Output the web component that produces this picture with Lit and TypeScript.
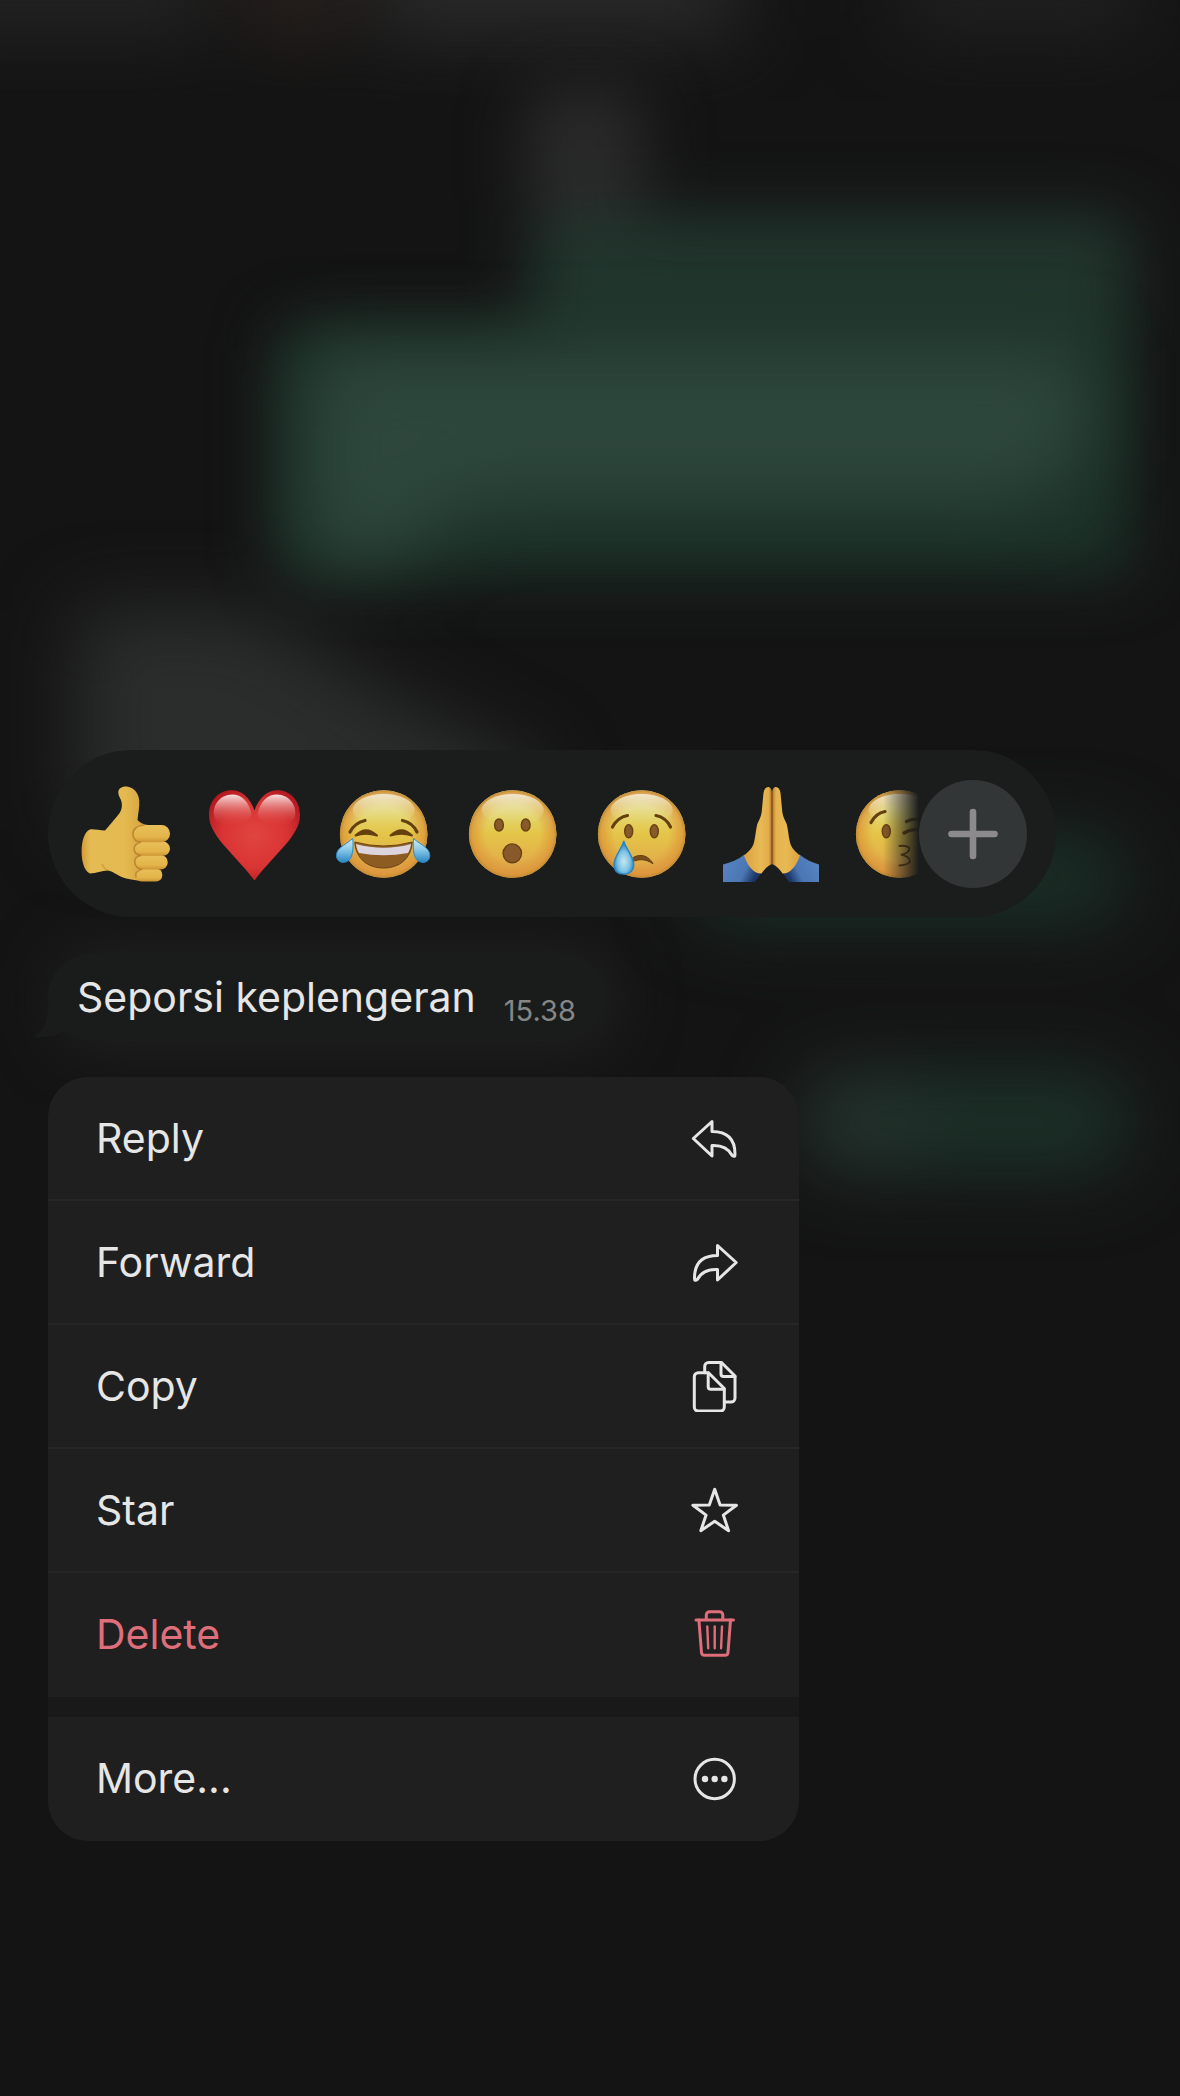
import { LitElement, html, svg, css, type SVGTemplateResult } from "lit";
import { customElement, property } from "lit/decorators.js";
import { classMap } from "lit/directives/class-map.js";

/* ---------- Reaction artwork (96 x 96 canvas each) ---------- */

const gradients = svg`
  <linearGradient id="face" x1="0" y1="0" x2="0" y2="1">
    <stop offset="0" stop-color="#e6dfa6"/>
    <stop offset="0.3" stop-color="#e3d46a"/>
    <stop offset="0.5" stop-color="#e4c548"/>
    <stop offset="0.8" stop-color="#e2b04a"/>
    <stop offset="1" stop-color="#dca04a"/>
  </linearGradient>
  <radialGradient id="rim">
    <stop offset="0.62" stop-color="#dd9238" stop-opacity="0"/>
    <stop offset="0.92" stop-color="#dd9238" stop-opacity="0.7"/>
    <stop offset="1" stop-color="#c08c35"/>
  </radialGradient>
  <linearGradient id="shine" x1="0" y1="0" x2="0" y2="1">
    <stop offset="0" stop-color="#f1eddc" stop-opacity="0.9"/>
    <stop offset="1" stop-color="#e6d770" stop-opacity="0"/>
  </linearGradient>
  <linearGradient id="tear" x1="0" y1="0" x2="0" y2="1">
    <stop offset="0" stop-color="#d8ecf2"/>
    <stop offset="0.45" stop-color="#8ccbe8"/>
    <stop offset="1" stop-color="#2a86c4"/>
  </linearGradient>
  <radialGradient id="drop" cx="0.5" cy="0.62" r="0.55">
    <stop offset="0" stop-color="#c9e6f0"/>
    <stop offset="0.55" stop-color="#7fc4e4"/>
    <stop offset="1" stop-color="#2580c0"/>
  </radialGradient>
  <radialGradient id="heart" cx="0.5" cy="0.5" r="0.6">
    <stop offset="0" stop-color="#e0453f"/>
    <stop offset="0.6" stop-color="#d93434"/>
    <stop offset="1" stop-color="#b0181f"/>
  </radialGradient>
  <linearGradient id="gloss" x1="0" y1="0" x2="0" y2="1">
    <stop offset="0" stop-color="#f6e0e0"/>
    <stop offset="0.4" stop-color="#e68a88" stop-opacity="0.8"/>
    <stop offset="1" stop-color="#dc4440" stop-opacity="0"/>
  </linearGradient>
  <linearGradient id="wrist" x1="0" y1="0" x2="1" y2="0">
    <stop offset="0" stop-color="#d39a38"/>
    <stop offset="0.12" stop-color="#e5bb54"/>
    <stop offset="0.6" stop-color="#e4b950"/>
    <stop offset="1" stop-color="#cf9836"/>
  </linearGradient>
  <linearGradient id="finger" x1="0" y1="0" x2="0" y2="1">
    <stop offset="0" stop-color="#e8c05a"/>
    <stop offset="0.7" stop-color="#e3b44a"/>
    <stop offset="1" stop-color="#cd9434"/>
  </linearGradient>
  <linearGradient id="palmL" x1="0" y1="0" x2="1" y2="0">
    <stop offset="0" stop-color="#dca23e"/>
    <stop offset="0.6" stop-color="#e8b954"/>
    <stop offset="0.88" stop-color="#e2ad4a"/>
    <stop offset="1" stop-color="#b27428"/>
  </linearGradient>
  <linearGradient id="palmR" x1="0" y1="0" x2="1" y2="0">
    <stop offset="0" stop-color="#b27428"/>
    <stop offset="0.14" stop-color="#e6b24e"/>
    <stop offset="0.5" stop-color="#e8b954"/>
    <stop offset="1" stop-color="#dca23e"/>
  </linearGradient>
  <linearGradient id="sleeveL" x1="0" y1="0" x2="1" y2="0.35">
    <stop offset="0" stop-color="#5a86c2"/>
    <stop offset="0.7" stop-color="#4a76b4"/>
    <stop offset="1" stop-color="#1c3766"/>
  </linearGradient>
  <linearGradient id="sleeveR" x1="1" y1="0" x2="0" y2="0.35">
    <stop offset="0" stop-color="#5a86c2"/>
    <stop offset="0.7" stop-color="#4a76b4"/>
    <stop offset="1" stop-color="#1c3766"/>
  </linearGradient>
`;

const face = svg`
  <circle cx="47.7" cy="48" r="43.8" fill="url(#face)"/>
  <circle cx="47.7" cy="48" r="43.8" fill="url(#rim)"/>
  <ellipse cx="47.7" cy="24" rx="31" ry="16" fill="url(#shine)"/>
`;

const eye = (x: number, y: number, rx: number, ry: number) => svg`
  <ellipse cx=${x} cy=${y} rx=${rx} ry=${ry} fill="#88592a" stroke="#68420f" stroke-width="1.4"/>
`;

const brow = (d: string) => svg`
  <path d=${d} fill="none" stroke="#65400f" stroke-width="3.2" stroke-linecap="round"/>
`;

const thumb = svg`
  <path fill="url(#wrist)" d="M40.3 6 C40.5 1.5 45 .2 49 .4 C57 1.5 60.5 8 61.2 14 C61.8 21 60 28 59.5 34 C62 37 66 38.5 70 39
    L76 60 L72 88 L66 95 C57 94.5 49 93 43.7 91 C38 88.5 35 85.5 30 84.5 C24 84.5 18 87.5 12 87.5 C6 85 3.6 75 3.6 65
    C3.7 55 6.5 45 12 43.4 C17 43 22 44.5 27 44.4 C31 40 37 33 42 26.5 C44.5 22 44.4 17 42.5 13 C41.3 10.5 40.2 8.500 40.3 6 Z"/>
  <path fill="none" stroke="#b37a24" stroke-opacity="0.35" stroke-width="2" d="M30 84.5 C27 83 25 81 24 78"/>
  <rect x="57.3" y="82.5" width="27" height="13" rx="6.2" fill="url(#finger)"/>
  <rect x="56.7" y="69" width="33" height="14.6" rx="7" fill="url(#finger)"/>
  <rect x="56" y="55.6" width="36" height="14.2" rx="7" fill="url(#finger)"/>
  <rect x="55.3" y="39" width="36.7" height="17.2" rx="8.5" fill="url(#finger)"/>
  <path fill="none" stroke="#a66c1f" stroke-opacity="0.6" stroke-width="1.6" stroke-linecap="round"
    d="M66 39.2 C58 39.5 54.5 44 55 49 C55.5 54 58 56 63 56.2 C57 57.5 56 60 56.2 63 C56.5 67 59 69.3 63 69.5
    C58 70.5 56.5 73 56.8 76 C57.2 80 59.5 82.8 64 83.2 C58 84.5 57 88 58 91"/>
`;

const heart = svg`
  <path fill="url(#heart)" d="M47.5 24.5 C43 11 34 4.200 24.8 4.200 C11 4.200 2 15 2 29 C2 50 26 66 47.5 94.500
    C69 66 93 50 93 29 C93 15 84 4.200 70.2 4.200 C61 4.200 52 11 47.5 24.5 Z"/>
  <path fill="url(#gloss)" d="M25 8.5 C35 8.5 42 16 44.5 28 C40 42 12 42 7.5 32 C4 20 13 8.5 25 8.5 Z"/>
  <path fill="url(#gloss)" d="M70 8.5 C60 8.5 53 16 50.5 28 C55 42 83 42 87.5 32 C91 20 82 8.5 70 8.5 Z"/>
`;

const joy = svg`
  ${face}
  ${brow("M14 46 Q18.5 37 29 34.5")}
  ${brow("M66.5 34.5 Q77 37 81 46")}
  <path fill="#65400f" stroke="#65400f" stroke-width="2" stroke-linejoin="round" d="M19.5 49.5 Q30 39 41 49.5 Q30 46 19.5 49.5 Z M54.5 49.5 Q65.5 39 76 49.5 Q65.5 46 54.5 49.5 Z"/>
  <path fill="#8d5c22" stroke="#6b4312" d="M18.8 56 Q47.5 64 76.2 56 C75.2 73 63 82 47.5 82 C32 82 19.8 73 18.8 56 Z"/>
  <path fill="#dcd5de" d="M20 58 Q47.5 65.5 75 58 C74.6 62 73.5 64.5 72 67 Q47.5 71.5 23 67 C21.5 64.5 20.4 62 20 58 Z"/>
  <path fill="url(#tear)" stroke="#2b8ccb" d="M16.8 52.5 C17.5 60 17 67 15 71.5 C11 79 .5 77.5 .5 69.5 C.5 62 8 60 16.8 52.5 Z"/>
  <path fill="url(#tear)" stroke="#2b8ccb" d="M77.5 52.5 C76.8 60 77.3 67 79.3 71.5 C83.3 79 93.8 77.5 93.8 69.5 C93.8 62 86.3 60 77.5 52.5 Z"/>
`;

const wow = svg`
  ${face}
  ${eye(34, 39, 4.4, 6)}
  ${eye(60.7, 39, 4.4, 6)}
  ${eye(47.3, 67.3, 9.2, 9.4)}
`;

const cry = svg`
  ${face}
  ${brow("M18.5 41 Q23.5 31.5 33.5 29.5")}
  ${brow("M62 29.5 Q72 31.5 76.5 41")}
  ${eye(34.7, 45.2, 4, 6.6)}
  ${eye(60.3, 45.2, 4, 6.6)}
  <path fill="#7a4d1a" stroke="#65400f" stroke-linejoin="round" d="M36 74.5 C41 68 53 66.5 59 77.8 C52 73 45 72.5 38 76 Z"/>
  <path fill="url(#drop)" stroke="#2c86c2" stroke-width="1.4" d="M29.8 55 C31.5 62.5 39.7 70.5 39.7 78.5 C39.7 85 35.5 88.1 29.8 88.1 C24 88.1 20 85 20 78.5 C20 70.5 28 62.5 29.8 55 Z"/>
`;

const pray = svg`
  <path fill="url(#sleeveL)" d="M0 78.5 C8 76.5 15 73.500 21.5 68.5 L38 87 C35.5 91 33.5 94 31.5 96 H0 Z"/>
  <path fill="url(#sleeveR)" d="M96 78.5 C89 76.5 83 73.500 76.5 68.5 L60 87 C62.5 91 64.5 94 66.5 96 H96 Z"/>
  <path fill="url(#palmL)" d="M40.5 7 C41 3 43 1 45 1 C47.5 1 48.9 3.5 48.9 8 V78 C44 80 41.5 83.5 38.5 87.5 C31 88 24.5 80 21 69.5
    C26 65.500 29.500 62 31 56.5 C32.5 50 32.8 44 34.3 38 C36 34 38 31 38.7 26 Z"/>
  <path fill="url(#palmR)" d="M57.5 7 C57 3 55 1 53 1 C50.500 1 49.1 3.5 49.1 8 V78 C54 80 56.5 83.5 59.5 87.5 C67 88 73.5 80 77 69.5
    C72 65.500 68.5 62 67 56.5 C65.5 50 65.2 44 63.7 38 C62 34 60 31 59.3 26 Z"/>
  <path fill="none" stroke="#84501a" stroke-width="1.2" d="M49 6 V78"/>
`;

const kiss = svg`
  ${face}
  ${brow("M19 36.5 Q23.5 27.5 33 25.5")}
  ${eye(34.3, 45.2, 4, 6.6)}
  ${brow("M54.5 35.5 Q66 30.5 75 36.500")}
  ${brow("M52 47 Q63 40.5 73 46.500")}
  <path fill="none" stroke="#65400f" stroke-width="2" stroke-linecap="round" stroke-linejoin="round"
    d="M47.5 60 C52 59 57.5 60.5 57.3 63 C57 66 53 68 49.5 68.8 C54 69.5 58 72 58 75 C58 78 53 79 47.5 79.500"/>
`;

/* ---------- Menu icons (52 x 52 canvas each) ---------- */

const icons: Record<string, SVGTemplateResult> = {
  reply: svg`<path d="M22 7.5 L3.3 24.5 L22 42 V31.5 C32 31 38 34 41.8 41 Q45.3 44 45 40 C45 26 38 17.5 22 17.5 Z"/>`,
  forward: svg`<path d="M27.5 7.5 L46.2 24.5 L27.5 42 V31.5 C17.5 31 11.5 34 7.7 41 Q4.2 44 4.5 40 C4.5 26 11.5 17.5 27.5 17.5 Z"/>`,
  copy: svg`
    <path d="M8.3 10.7 H18.5 L34.3 26.5 V45 a4 4 0 0 1 -4 4 H8.3 a4 4 0 0 1 -4 -4 V14.7 a4 4 0 0 1 4 -4 Z"/>
    <path d="M18.2 10.7 V24.7 a2.5 2.5 0 0 0 2.5 2.5 H34.3"/>
    <path d="M14.7 10.7 V4.5 a4 4 0 0 1 4 -4 H31.5 L45 14 V36 a4 4 0 0 1 -4 4 H34.3"/>
    <path d="M31 .5 V12 a2.5 2.5 0 0 0 2.5 2.5 H45"/>`,
  star: svg`<path d="M24.7 3.3 L30.1 19 L46.5 19.2 L33.3 29.1 L38.6 44.7 L24.7 35.3 L10.8 44.7 L16.1 29.1 L2.9 19.2 L19.3 19 Z"/>`,
  trash: svg`
    <path d="M6 10 H43.5 M16.3 10 V5 a3.3 3.3 0 0 1 3.3 -3.3 H29.5 a3.3 3.3 0 0 1 3.3 3.3 V10"/>
    <path d="M8.9 10 L11.5 42.5 a3 3 0 0 0 3 2.8 H35 a3 3 0 0 0 3 -2.8 L40.5 10"/>
    <path stroke-width="2.4" d="M17.3 16.5 L18.2 38.3 M24.7 16.5 V38.3 M32 16.5 L31.1 38.3"/>`,
  more: svg`
    <circle cx="24.7" cy="25" r="19.7"/>
    <g fill="currentColor" stroke="none">
      <circle cx="15" cy="25" r="3.2"/><circle cx="24.7" cy="25" r="3.2"/><circle cx="34.4" cy="25" r="3.2"/>
    </g>`,
};

/* ---------- Blurred conversation behind the overlay ---------- */

@customElement("chat-backdrop")
export class ChatBackdrop extends LitElement {
  static styles = css`
    :host {
      position: absolute;
      inset: 0;
      overflow: hidden;
    }
    .canvas {
      display: block;
      width: 100%;
      height: 100%;
    }
  `;

  render() {
    return html`
      <svg class="canvas" viewBox="0 0 1180 2096" preserveAspectRatio="none" aria-hidden="true">
        <defs>
          <filter id="soft" x="-50%" y="-50%" width="200%" height="200%" color-interpolation-filters="sRGB">
            <feGaussianBlur stdDeviation="30"/>
          </filter>
          <filter id="wide" x="-50%" y="-50%" width="200%" height="200%" color-interpolation-filters="sRGB">
            <feGaussianBlur stdDeviation="38"/>
          </filter>
        </defs>
        <g filter="url(#wide)">
          <rect x="-80" y="-80" width="290" height="116" fill="#232323"/>
          <rect x="250" y="-80" width="90" height="120" fill="#2a211d"/>
          <rect x="370" y="-80" width="370" height="120" fill="#292929"/>
          <rect x="900" y="-80" width="240" height="116" fill="#202020"/>
        </g>
        <g filter="url(#soft)">
          <rect x="524" y="86" width="122" height="130" rx="30" fill="#292929"/>
          <rect x="530" y="214" width="602" height="200" rx="20" fill="#21352d"/>
          <rect x="276" y="326" width="856" height="250" rx="20" fill="#1c3229"/>
        </g>
        <g filter="url(#wide)">
          <path d="M310 350 H1086 V460 L1010 500 H470 L390 560 H310 Z" fill="#2e473c"/>
          <path d="M76 610 H250 L400 700 L540 770 V830 H76 Z" fill="#2b2c2c"/>
          <rect x="690" y="836" width="436" height="84" rx="40" fill="#1b3229"/>
          <rect x="800" y="1072" width="330" height="100" rx="40" fill="#1c3129"/>
          <rect x="800" y="1080" width="120" height="80" rx="30" fill="#26352f"/>
        </g>
        <g filter="url(#soft)">
          <rect x="56" y="946" width="560" height="106" rx="40" fill="#202020"/>
        </g>
      </svg>
    `;
  }
}

/* ---------- Reaction bar ---------- */

@customElement("reaction-bar")
export class ReactionBar extends LitElement {
  static styles = css`
    :host {
      display: block;
    }
    .bar {
      display: flex;
      align-items: center;
      height: 167px;
      box-sizing: border-box;
      padding: 0 29px 0 30px;
      border-radius: 84px;
      background: #1b1d1c;
    }
    .list {
      flex: 1;
      min-width: 0;
      display: flex;
      gap: 33px;
      overflow: hidden;
      mask-image: linear-gradient(to right, #000 calc(100% - 36px), transparent);
    }
    .reaction,
    .add {
      flex: none;
      padding: 0;
      border: 0;
      background: none;
      cursor: pointer;
    }
    .art {
      display: block;
      width: 96px;
      height: 96px;
    }
    .add {
      display: grid;
      place-items: center;
      width: 108px;
      height: 108px;
      border-radius: 50%;
      background: #323636;
      color: #8c8a8d;
    }
    .plus {
      display: block;
      width: 52px;
      height: 52px;
    }
  `;

  private reactions = [
    { label: "Thumbs up", art: thumb },
    { label: "Heart", art: heart },
    { label: "Tears of joy", art: joy },
    { label: "Surprised", art: wow },
    { label: "Crying", art: cry },
    { label: "Folded hands", art: pray },
    { label: "Kiss", art: kiss },
  ];

  render() {
    return html`
      <div class="bar">
        <div class="list">
          ${this.reactions.map(
            (r, i) => html`
              <button class="reaction" type="button" aria-label=${r.label}>
                <svg class="art" viewBox="0 0 96 96" aria-hidden="true">
                  ${i === 0 ? svg`<defs>${gradients}</defs>` : null}${r.art}
                </svg>
              </button>
            `,
          )}
        </div>
        <button class="add" type="button" aria-label="More reactions">
          <svg class="plus" viewBox="0 0 52 52" aria-hidden="true">
            <path d="M4.5 26 H47.5 M26 4 V48" fill="none" stroke="currentColor" stroke-width="6.6" stroke-linecap="round"/>
          </svg>
        </button>
      </div>
    `;
  }
}

/* ---------- Message bubble ---------- */

@customElement("message-bubble")
export class MessageBubble extends LitElement {
  static styles = css`
    :host {
      display: block;
      max-width: 100%;
    }
    .bubble {
      position: relative;
      display: flex;
      align-items: flex-end;
      gap: 28px;
      padding: 13px 30px 13px 29px;
      border-radius: 43px;
      background: #1a1c1b;
    }
    .tail {
      position: absolute;
      left: -14px;
      bottom: 0;
      width: 40px;
      height: 40px;
      fill: #1a1c1b;
    }
    .text {
      margin: 0;
      padding: 6px 0;
      font-size: 41px;
      line-height: 48px;
      color: #e6e6e6;
    }
    .time {
      font-size: 29px;
      line-height: 32px;
      color: #858786;
    }
  `;

  @property() text = "";
  @property() time = "";

  render() {
    return html`
      <div class="bubble">
        <svg class="tail" viewBox="0 0 40 40" aria-hidden="true">
          <path d="M14 4 C14 20 10 31 0 37 C12 38 22 36 30 31 Z"/>
        </svg>
        <p class="text">${this.text}</p>
        <time class="time">${this.time}</time>
      </div>
    `;
  }
}

/* ---------- Context menu ---------- */

interface Action {
  label: string;
  icon: string;
  danger?: boolean;
}

@customElement("context-menu")
export class ContextMenu extends LitElement {
  static styles = css`
    :host {
      display: block;
      width: 100%;
      max-width: 751px;
    }
    .menu {
      display: flex;
      flex-direction: column;
      gap: 20px;
      overflow: hidden;
      border-radius: 40px;
      background: #191919;
    }
    .group {
      display: flex;
      flex-direction: column;
      background: #1f1f1f;
    }
    .item {
      display: flex;
      align-items: center;
      justify-content: space-between;
      height: 124px;
      box-sizing: border-box;
      padding: 0 60px 0 48px;
      border: 0;
      border-bottom: 2px solid #272727;
      background: none;
      color: #e6e6e6;
      font: inherit;
      font-size: 41px;
      line-height: 48px;
      text-align: left;
      cursor: pointer;
    }
    .item:last-child {
      border-bottom-color: transparent;
    }
    .danger {
      color: #df6e7b;
    }
    .icon {
      flex: none;
      display: block;
      width: 52px;
      height: 52px;
      fill: none;
      stroke: currentColor;
      stroke-width: 3px;
      stroke-linecap: round;
      stroke-linejoin: round;
    }
  `;

  private groups: Action[][] = [
    [
      { label: "Reply", icon: "reply" },
      { label: "Forward", icon: "forward" },
      { label: "Copy", icon: "copy" },
      { label: "Star", icon: "star" },
      { label: "Delete", icon: "trash", danger: true },
    ],
    [{ label: "More...", icon: "more" }],
  ];

  render() {
    return html`
      <div class="menu">
        ${this.groups.map(
          (group) => html`
            <div class="group">
              ${group.map(
                (a) => html`
                  <button type="button" class=${classMap({ item: true, danger: !!a.danger })}>
                    <span>${a.label}</span>
                    <svg class="icon" viewBox="-3 -2 52 52" aria-hidden="true">${icons[a.icon]}</svg>
                  </button>
                `,
              )}
            </div>
          `,
        )}
      </div>
    `;
  }
}

/* ---------- Page ---------- */

@customElement("app-root")
export class AppRoot extends LitElement {
  static styles = css`
    :host {
      display: block;
      font-family: Inter, "Liberation Sans", sans-serif;
    }
    .page {
      position: relative;
      min-height: 100vh;
      box-sizing: border-box;
      padding: 750px 124px 120px 48px;
      background: #141414;
    }
    .overlay {
      position: relative;
      display: flex;
      flex-direction: column;
      align-items: flex-start;
      gap: 37px;
    }
    .reactions {
      width: 100%;
    }
  `;

  render() {
    return html`
      <div class="page">
        <chat-backdrop></chat-backdrop>
        <main class="overlay">
          <reaction-bar class="reactions"></reaction-bar>
          <message-bubble text="Seporsi keplengeran" time="15.38"></message-bubble>
          <context-menu></context-menu>
        </main>
      </div>
    `;
  }
}
